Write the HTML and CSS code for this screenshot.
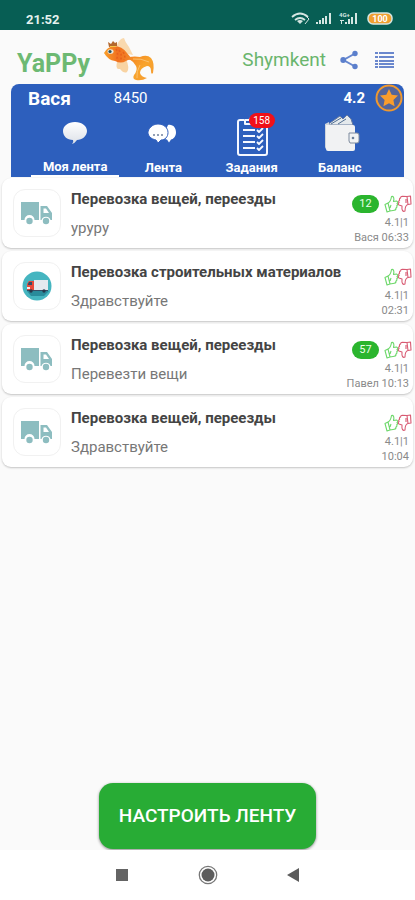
FILE: index.html
```html
<!DOCTYPE html>
<html lang="ru">
<head>
<meta charset="utf-8">
<meta name="viewport" content="width=device-width, initial-scale=1">
<title>YaPPy</title>
<link rel="stylesheet" href="styles.css">
</head>
<body>
<svg class="defs" aria-hidden="true">
  <symbol id="truck" viewBox="0 0 32 24">
    <path fill="#8dbdc0" d="M0 1h18v18h-4.500a5 5 0 0 0-10 0H0z"/>
    <path fill="#8dbdc0" fill-rule="evenodd" d="M19.500 5h6.500l5 7v7h-1.500a4.800 4.800 0 0 0-9 0h-1zM22.500 7.500v4.500h5.500l-3-4.500z"/>
    <circle cx="8.500" cy="20" r="3.200" fill="#8dbdc0"/><circle cx="25" cy="20" r="3.200" fill="#8dbdc0"/>
  </symbol>
  <symbol id="thumbs" viewBox="0 0 28 18">
    <g fill="none" stroke-width="1.100" stroke-linejoin="round">
      <path stroke="#6ed86b" d="M1 9.500l3-1.500 2 8-3 1zM4 8c2-1 3-3 3.500-6.500 2-.5 3 1.500 2 5l3-.5c1.500.5 1.500 2 .5 2.500 1 1 .5 2-.3 2.300.6 1 0 2-.8 2.200.2 1-.5 2-1.500 2.200L6 16M7 10l-1 3"/>
      <path stroke="#d85a72" d="M26.500 1l.5 8-3 .5-1-8zM24 9.500c-2 .5-3 2-3 6.500-2 1-3.500-.5-3-5l-3-1c-1-.7-.9-2 .1-2.500-.8-1-.3-2 .5-2.300-.4-1 0-2 1-2.300 0-1 .7-1.600 1.700-1.600l4.700.2M22 4v4"/>
    </g>
  </symbol>
</svg>

<div class="screen">
  <div class="status">
    <span class="clock">21:52</span>
    <svg class="signals" width="104" height="16" viewBox="0 0 104 16">
      <g fill="none" stroke="#d4e6e2" stroke-width="1.800">
        <path d="M1 6q8-7 16 0M4 9q5-4 10 0"/>
      </g>
      <path fill="#d4e6e2" d="M6 10q3-2 6 0l-3 3z"/>
      <path fill="none" stroke="#d4e6e2" d="M15 5l3 3-4 5"/>
      <path fill="#d4e6e2" d="M25 11h2v2h-2zM28 9h2v4h-2zM31 7h2v6h-2zM34 5h2v8h-2zM38 2h2v11h-2zM54 11h2v2h-2zM57 8h2v5h-2zM60 6h2v7h-2zM64 2h2v11h-2zM49 9h4v1h-2v3h-1v-3h-1z"/>
      <text x="48" y="6" class="net">4G+</text>
      <rect x="77" y="2" width="24" height="11" rx="5" fill="#f0a030" stroke="#d4e6e2" stroke-width="1.500"/>
      <text x="89" y="11" text-anchor="middle" class="charge">100</text>
    </svg>
  </div>

  <header class="top">
    <h1 class="brand">YaPPy</h1>
    <svg class="fish" width="52" height="44" viewBox="0 0 52 44">
      <defs>
        <linearGradient id="tail" x1="0" y1="0" x2="1" y2="1"><stop offset="0" stop-color="#f58220"/><stop offset=".5" stop-color="#f8a42c"/><stop offset="1" stop-color="#f59a32"/></linearGradient>
        <linearGradient id="body" x1="0" y1="0" x2="1" y2="0"><stop offset="0" stop-color="#f9a02a"/><stop offset=".5" stop-color="#f07020"/><stop offset="1" stop-color="#f38a2a"/></linearGradient>
      </defs>
      <path fill="#f9d9ae" d="M13 7Q16 0 20 0Q21 4 25 9L29 17Q21 16 13 9z"/>
      <path fill="#f8d3a2" d="M13 24Q18 24 22 21Q26 30 23 34Q20 36 16 31Q11 32 13 24z"/>
      <path fill="url(#tail)" d="M25 19Q31 18 36 19Q43 16 47 20Q51 25 49 35Q47 37 47 33Q47 28 43 28Q36 30 36 35Q37 39 43 40Q38 43 32 42Q28 41 30 37Q34 32 32 28Q29 23 25 21z"/>
      <path fill="url(#body)" d="M0 15Q3 9 10 8Q18 8 23 15Q26 18 28 22Q25 21 22 23Q17 26 11 23Q4 22 0 15z"/>
      <g fill="none" stroke="#e8601c" stroke-width="1.500" stroke-dasharray="2 2"><path d="M12 11Q15 17 12 22M15 12Q19 18 16 23M19 14Q22 18 20 22"/></g>
      <path fill="#b3682e" d="M5 9L4 4l3 2 2-3 2 2 2-1v4z"/>
      <path fill="#f7c646" d="M6 8h6v1H6z"/>
      <ellipse cx="6.500" cy="13.500" rx="3" ry="2.300" fill="#e8e9df"/><circle cx="6" cy="13.500" r="1.600" fill="#27505d"/>
      <path stroke="#fbc06e" fill="none" d="M29 21Q37 20 45 24M33 40Q32 34 36 27"/>
    </svg>
    <a class="city" href="#city">Shymkent</a>
    <button class="icon-btn" type="button" aria-label="Поделиться">
      <svg width="18" height="20" viewBox="0 0 18 20"><path fill="none" stroke="#6687cf" stroke-width="2" d="M15 3.500L3.500 10 15 16.500"/><g fill="#5b7fcc"><circle cx="15" cy="3.500" r="2.700"/><circle cx="3.200" cy="10" r="2.900"/><circle cx="15" cy="16.500" r="2.700"/></g></svg>
    </button>
    <button class="icon-btn" type="button" aria-label="Меню">
      <svg width="20" height="18" viewBox="0 0 20 18"><path fill="#6a87cd" d="M0 1h3v2H0zM4 1h15v2H4zM0 5h3v2H0zM4 5h15v2H4zM0 9h3v2H0zM4 9h15v2H4zM0 12h3v2H0zM4 12h15v2H4zM4 15h15v2H4zM0 15h3v2H0z"/></svg>
    </button>
  </header>

  <section class="panel">
    <div class="user">
      <strong class="name">Вася</strong>
      <span class="points">8450</span>
      <strong class="rating">4.2</strong>
      <svg class="star" width="28" height="28" viewBox="0 0 28 28"><circle cx="14" cy="14" r="12.500" fill="#54659a" stroke="#f0982e" stroke-width="2"/><path fill="#fa9d2b" d="M14 5l2.700 5.700 6.300.9-4.600 4.400 1.200 6.300-5.600-3-5.600 3L9.600 16 5 11.600l6.300-.9z"/></svg>
    </div>
    <nav class="tabs">
      <a class="tab active" href="#my">
        <svg width="44" height="44" viewBox="0 0 44 44"><defs><linearGradient id="bub" x1="0" y1="0" x2="0" y2="1"><stop offset="0" stop-color="#fff"/><stop offset="1" stop-color="#dde1e8"/></linearGradient></defs><path fill="url(#bub)" d="M22 10c7 0 12 4 12 9s-5 9-10 9q-2 3-5 4 2-2 1-4c-6 0-10-4-10-9s5-9 12-9z"/></svg>
        <span>Моя лента</span>
      </a>
      <a class="tab" href="#feed">
        <svg width="44" height="44" viewBox="0 0 44 44"><path fill="#fff" d="M27 13c5-1 8 3 8 7.500 0 4-3 7-5 7l-2 3-2-3-5-1z"/><path fill="#fff" stroke="#315fbd" stroke-width="1" d="M17 12c6 0 10 4 10 8.500S24 28 20 28l-3 3-2-3c-5-1-8-4-8-7.500S11 12 17 12z"/><g fill="#6f809d"><circle cx="13" cy="23" r="1"/><circle cx="17" cy="23" r="1"/><circle cx="21" cy="23" r="1"/></g></svg>
        <span>Лента</span>
      </a>
      <a class="tab" href="#tasks">
        <span class="icon-wrap">
          <svg width="44" height="44" viewBox="0 0 44 44"><g fill="none" stroke="#f5f8ff" stroke-width="2" stroke-linejoin="round"><path d="M14 8h-4q-2 0-2 2v31q0 2 2 2h25q2 0 2-2V10q0-2-2-2h-4"/><path d="M15 12V8h4q3-4 6 0h4v4z"/><path d="M13 18h12M13 24h12M13 30h12M13 36h12"/><path d="M27 18l2 2 4-4M27 24l2 2 4-4M27 30l2 2 4-4M27 36l2 2 4-4" stroke-width="1.800"/></g></svg>
          <span class="badge">158</span>
        </span>
        <span>Задания</span>
      </a>
      <a class="tab" href="#balance">
        <svg width="44" height="44" viewBox="0 0 44 44"><path fill="#e4e9ec" stroke="#667a9f" d="M9 13L22 4l3 3 4-4 4 4 2 6z"/><path stroke="#526f91" fill="none" d="M13 12L23 6M20 12l8-5"/><path fill="#cfd5dc" d="M7 12l4-2v4h24v24l-26-1q-2 0-2-2z"/><path fill="#f1f2f3" d="M8 13h27q2 0 2 2v22q0 2-2 2H10q-2 0-2-2z"/><path fill="#f1f3f4" stroke="#7d8a9c" d="M31 21h8q2 0 2 2v6q0 2-2 2h-7l-1-2z"/><circle cx="35" cy="26" r="1.300" fill="#6b7f99"/></svg>
        <span>Баланс</span>
      </a>
    </nav>
  </section>

  <main class="list">
    <article class="card">
      <div class="thumb"><svg width="32" height="24"><use href="#truck"/></svg></div>
      <div class="text"><h2>Перевозка вещей, переезды</h2><p>уруру</p></div>
      <div class="meta"><div class="votes"><span class="pill">12</span><svg width="28" height="18"><use href="#thumbs"/></svg></div><span>4.1|1</span><span>Вася 06:33</span></div>
    </article>
    <article class="card">
      <div class="thumb"><svg width="30" height="30" viewBox="0 0 30 30"><circle cx="15" cy="15" r="14.500" fill="#45b5c0"/><path fill="#298b9b" d="M5 20h22l-5 5H9z"/><path fill="#e4e9ef" d="M12 9h14v10H12z"/><path fill="#e8493b" d="M5 13l2-3h5v10H5z"/><path fill="#344c65" d="M6 13l1-2h3v3H6zM5 19h21v1H5z"/><path fill="#f5eded" d="M5 16h3v2H5z"/><g fill="#26384b"><circle cx="9" cy="20" r="1.700"/><circle cx="22" cy="20" r="1.700"/></g></svg></div>
      <div class="text"><h2>Перевозка строительных материалов</h2><p>Здравствуйте</p></div>
      <div class="meta"><div class="votes"><svg width="28" height="18"><use href="#thumbs"/></svg></div><span>4.1|1</span><span>02:31</span></div>
    </article>
    <article class="card">
      <div class="thumb"><svg width="32" height="24"><use href="#truck"/></svg></div>
      <div class="text"><h2>Перевозка вещей, переезды</h2><p>Перевезти вещи</p></div>
      <div class="meta"><div class="votes"><span class="pill">57</span><svg width="28" height="18"><use href="#thumbs"/></svg></div><span>4.1|1</span><span>Павел 10:13</span></div>
    </article>
    <article class="card">
      <div class="thumb"><svg width="32" height="24"><use href="#truck"/></svg></div>
      <div class="text"><h2>Перевозка вещей, переезды</h2><p>Здравствуйте</p></div>
      <div class="meta"><div class="votes"><svg width="28" height="18"><use href="#thumbs"/></svg></div><span>4.1|1</span><span>10:04</span></div>
    </article>
  </main>

  <button class="setup" type="button">НАСТРОИТЬ ЛЕНТУ</button>

  <div class="sysnav">
    <button type="button" aria-label="Недавние"><svg width="20" height="20" viewBox="0 0 20 20"><path fill="#646464" d="M4 4h12v12H4z"/></svg></button>
    <button type="button" aria-label="Домой"><svg width="20" height="20" viewBox="0 0 20 20"><circle cx="10" cy="10" r="8.700" fill="none" stroke="#777" stroke-width="1.300"/><circle cx="10" cy="10" r="6.500" fill="#5c5c5c"/></svg></button>
    <button type="button" aria-label="Назад"><svg width="20" height="20" viewBox="0 0 20 20"><path fill="#5c5c5c" d="M3 10l12-7v14z"/></svg></button>
  </div>
</div>
</body>
</html>
```
FILE: styles.css
```css
* { box-sizing: border-box; }
body {
  margin: 0;
  background: #fafafa;
  font-family: Roboto, "Liberation Sans", sans-serif;
  color: #444;
}
button { border: 0; padding: 0; background: none; font: inherit; }
a { color: inherit; text-decoration: none; }
svg { display: block; flex: none; }
.defs { position: absolute; width: 0; height: 0; }
.screen { display: flex; flex-direction: column; min-height: 100vh; }

.status {
  display: flex;
  justify-content: space-between;
  align-items: center;
  height: 30px;
  padding: 8px 20px 0 26px;
  background: #075e54;
}
.clock { color: #e4f1ee; font-size: 13px; font-weight: 700; }
.net { font-size: 6px; font-weight: 700; fill: #d4e6e2; }
.charge { font-size: 9px; font-weight: 700; fill: #fff; }

.top { display: flex; align-items: center; height: 54px; padding: 5px 20px 0 17px; }
.brand { margin: 0; padding-top: 8px; color: #6db973; font-size: 25px; font-weight: 700; }
.fish { margin-left: 14px; }
.city { margin-left: auto; color: #6ab56d; font-size: 19px; }
.icon-btn { margin-left: 14px; }
.icon-btn + .icon-btn { margin-left: 17px; }

.panel { margin: 0 11px; border-radius: 8px 8px 0 0; background: #2d5fbd; color: #fff; }
.user { display: flex; align-items: center; height: 28px; padding: 0 1px 0 17px; }
.name { font-size: 19px; }
.points { margin-left: 43px; font-size: 15px; }
.rating { margin-left: auto; font-size: 15px; }
.star { margin-left: 10px; }
.tabs { display: grid; grid-template-columns: repeat(4, 1fr); padding: 0 20px; }
.tab {
  display: flex;
  flex-direction: column;
  align-items: center;
  height: 65px;
  border-bottom: 2px solid transparent;
  font-size: 13px;
  line-height: 15px;
  font-weight: 700;
}
.tab > span:last-child { margin-top: 4px; }
.active { border-color: #fff; }
.active > span:last-child { margin-top: 3px; }
.icon-wrap { position: relative; }
.badge {
  position: absolute;
  top: 1px;
  left: 19px;
  width: 26px;
  border-radius: 8px;
  background: #f01018;
  font-size: 10px;
  font-weight: 400;
  line-height: 15px;
  text-align: center;
}

.list { display: flex; flex-direction: column; gap: 3px; padding: 1px 2px 16px; }
.card {
  display: flex;
  min-height: 70px;
  padding: 0 3px 0 11px;
  border-radius: 9px;
  background: #fff;
  box-shadow: 0 1px 2px #c4c4c4;
}
.thumb {
  display: grid;
  place-items: center;
  flex: none;
  width: 48px;
  height: 48px;
  margin: 11px 10px 0 0;
  border: 1px solid #f1f1f1;
  border-radius: 12px;
}
.text { flex: 1; min-width: 0; padding-top: 11px; }
h2 { margin: 0; font-size: 15px; line-height: 20px; font-weight: 700; white-space: nowrap; }
p { margin: 9px 0 0; color: #777; font-size: 15px; line-height: 20px; }
.meta {
  display: flex;
  flex-direction: column;
  align-items: flex-end;
  padding-top: 17px;
  color: #8a8a8a;
  font-size: 11px;
  line-height: 15px;
}
.meta > span { padding-right: 1px; }
.votes { display: flex; gap: 5px; margin: 0 -2px 2px 0; }
.pill {
  width: 27px;
  border-radius: 9px;
  background: #2bb52e;
  color: #e9ffe9;
  line-height: 18px;
  text-align: center;
}

.setup {
  align-self: center;
  margin-top: auto;
  padding: 21px 20px;
  border-radius: 14px;
  background: #28ac35;
  box-shadow: 0 1px 3px #888;
  color: #fff;
  font-size: 19px;
  line-height: 24px;
  font-weight: 500;
}
.sysnav {
  display: flex;
  justify-content: center;
  gap: 66px;
  height: 50px;
  margin-top: 1px;
  align-items: center;
  background: #fff;
}
```
